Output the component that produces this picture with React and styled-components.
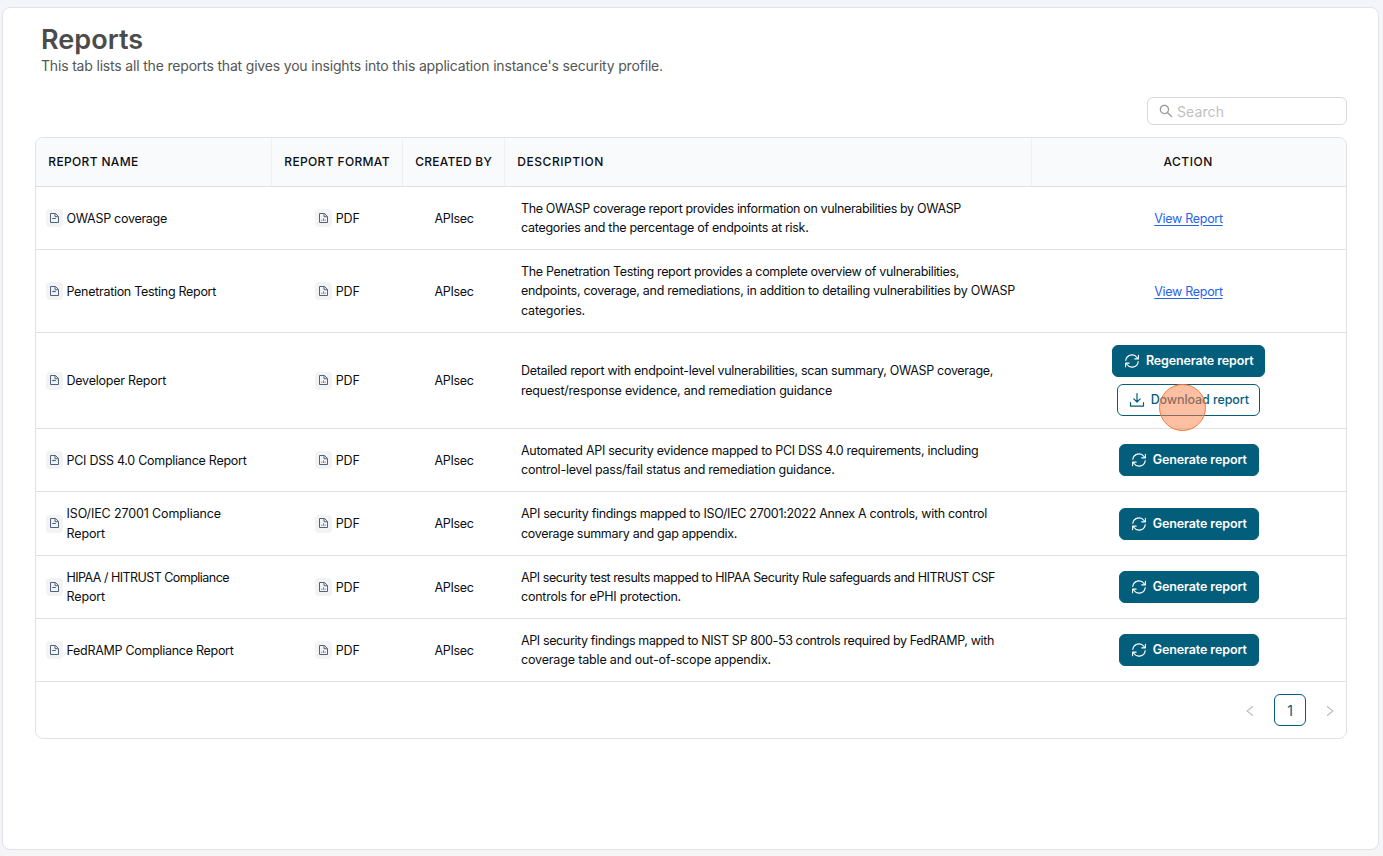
import styled, { createGlobalStyle, css } from "styled-components";
import { AiOutlineSearch, AiOutlineLeft, AiOutlineRight } from "react-icons/ai";

const GlobalStyle = createGlobalStyle`
  * {
    box-sizing: border-box;
  }

  body {
    margin: 0;
    background: #f4f5fb;
    color: #0b0d12;
    font-family: "Inter", "Liberation Sans", sans-serif;
    font-size: 12.5px;
  }
`;

const Page = styled.div`
  height: 856px;
  padding: 7px 4px 0 2px;
  overflow: hidden;
  background: linear-gradient(#f4f5fb 850px, #f5f5f5 850px);
`;

const Panel = styled.main`
  height: 843px;
  padding: 0 31px 0 32px;
  border: 1px solid #e2e3e7;
  border-radius: 8px;
  background: #fff;
`;

const PageHeader = styled.header`
  height: 89px;
  padding: 15px 0 0 6px;
`;

const Title = styled.h1`
  margin: 0;
  font-size: 27px;
  font-weight: 600;
  line-height: 33px;
  letter-spacing: 0.05px;
  color: #4b4b4b;
`;

const Subtitle = styled.p`
  margin: 0;
  font-size: 14px;
  line-height: 20px;
  letter-spacing: -0.179px;
  color: #555;
  white-space: nowrap;
`;

const Toolbar = styled.div`
  display: flex;
  justify-content: flex-end;
  height: 40px;
`;

const SearchBox = styled.label`
  display: flex;
  align-items: center;
  gap: 3px;
  width: 200px;
  height: 28px;
  padding: 0 10px;
  border: 1px solid #d9d9d9;
  border-radius: 6px;
  color: #999;

  & input {
    flex: 1;
    min-width: 0;
    padding: 0;
    border: none;
    outline: none;
    font-family: inherit;
    font-size: 14px;
    letter-spacing: 0.1px;
    background: none;
  }

  & input::placeholder {
    color: #bfbfbf;
  }
`;

const Table = styled.section`
  height: 602px;
  border: 1px solid #e0e2e5;
  border-radius: 8px;
  overflow: hidden;
`;

const columns = css`
  display: grid;
  grid-template-columns: 236px 131px 102px 527px 1fr;
`;

const HeadRow = styled.div`
  ${columns}
  height: 49px;
  background: #f9fafc;
  border-bottom: 1px solid #dedfe1;
`;

const HeadCell = styled.div`
  display: flex;
  align-items: center;
  justify-content: ${({ $center }) => ($center ? "center" : "flex-start")};
  padding: 0 12px 2px 12.3px;
  border-right: 1px solid #f0f0f0;
  font-size: 12px;
  font-weight: 500;
  letter-spacing: ${({ $track }) => $track}px;
  white-space: nowrap;

  &:last-child {
    padding-right: 14px;
    border-right: none;
  }
`;

const Row = styled.div`
  ${columns}
  height: ${({ $height }) => $height}px;
  border-bottom: 1px solid #dedfe1;
`;

const Cell = styled.div`
  display: flex;
  align-items: center;
  justify-content: ${({ $center }) => ($center ? "center" : "flex-start")};
  gap: 3.5px;
  padding: ${({ $pad }) => $pad || "0"};
`;

const ActionCell = styled(Cell)`
  flex-direction: column;
  gap: 7px;
`;

const IconTile = styled.span`
  display: grid;
  place-items: center;
  width: 17px;
  height: 18px;
  border-radius: 4px;
  background: #f3f3f4;
  color: #4f617f;
`;

const Lines = styled.div`
  display: flex;
  flex-direction: column;
  align-items: flex-start;
  white-space: nowrap;
`;

const Line = styled.span`
  line-height: 19.4px;
  letter-spacing: ${({ $track }) => $track || 0}px;

  &:only-child,
  ${() => IconTile} + & {
    margin-top: 0.8px;
  }
`;

const ReportLink = styled.a`
  color: #2563eb;
  letter-spacing: -0.295px;
  text-decoration: underline;
  text-underline-offset: 2px;
`;

const Button = styled.button`
  display: flex;
  align-items: center;
  justify-content: center;
  gap: 5.5px;
  width: ${({ $width }) => $width}px;
  height: 32px;
  padding: 0 0 1px 1px;
  border: 1px solid #035e7b;
  border-radius: 6px;
  background: ${({ $outline }) => ($outline ? "#fff" : "#035e7b")};
  color: ${({ $outline }) => ($outline ? "#035e7b" : "#fff")};
  font-family: inherit;
  font-size: 12.5px;
  font-weight: ${({ $outline }) => ($outline ? 500 : 600)};
  letter-spacing: -0.11px;
  white-space: nowrap;

  & svg {
    margin-top: 1px;
  }
`;

const PointerAnchor = styled.div`
  position: relative;
`;

const Pointer = styled.span`
  position: absolute;
  top: 0;
  left: 42px;
  width: 47px;
  height: 47px;
  border: 1px solid #f97a35;
  border-radius: 50%;
  background: rgba(255, 127, 72, 0.5);
  pointer-events: none;
`;

const Pagination = styled.nav`
  display: flex;
  align-items: center;
  justify-content: flex-end;
  height: 56px;
  gap: 17px;
  padding-right: 9px;
  color: #b8b8b8;

  & > svg {
    margin-top: 2px;
  }
`;

const PageNumber = styled.span`
  display: grid;
  place-items: center;
  width: 32px;
  height: 32px;
  border: 1px solid #035e7b;
  border-radius: 6px;
  color: #035e7b;
  font-size: 14px;
`;

function ReportIcon() {
  return (
    <svg width="9" height="11" viewBox="0 0 9 11" fill="none" stroke="currentColor">
      <path d="M.5 .5h5l3 3v6H.5z" />
      <path d="M5 .5v3.2h3.2" />
      <path d="M2.2 5.5h3.6" strokeWidth="1.2" />
    </svg>
  );
}

function PdfIcon() {
  return (
    <svg width="9" height="11" viewBox="0 0 9 11" fill="none" stroke="currentColor">
      <path d="M.5 .5h5l3 3v6H.5z" />
      <path d="M5 .5v3.2h3.2" />
      <path d="M2.8 8V6.6M4.5 8V5.2M6.1 8V6.4" strokeWidth=".7" />
    </svg>
  );
}

function RefreshIcon() {
  return (
    <svg
      width="16"
      height="16"
      viewBox="0 0 16 16"
      fill="none"
      stroke="currentColor"
      strokeWidth="1.1"
      strokeLinecap="round"
      strokeLinejoin="round"
    >
      <path d="M1.8 7.4A6.2 6.2 0 0 1 13 4.5L14.2 5.8M14.4 2.3v3.6h-3.6" />
      <path d="M14.2 8.6A6.2 6.2 0 0 1 3 11.5L1.8 10.2M1.6 13.7v-3.6h3.6" />
    </svg>
  );
}

function DownloadIcon() {
  return (
    <svg
      width="16"
      height="16"
      viewBox="0 0 16 16"
      fill="none"
      stroke="currentColor"
      strokeWidth="1.2"
      strokeLinecap="round"
      strokeLinejoin="round"
    >
      <path d="M8 1.5v8.3M4.8 6.8 8 10l3.2-3.2M1.5 10.5v3.6h13v-3.6" />
    </svg>
  );
}

// every line of text carries its own letter spacing
const REPORTS = [
  {
    name: [["OWASP coverage", -0.282]],
    description: [
      ["The OWASP coverage report provides information on vulnerabilities by OWASP", -0.351],
      ["categories and the percentage of endpoints at risk.", -0.284],
    ],
    action: "view",
    height: 63,
  },
  {
    name: [["Penetration Testing Report", -0.294]],
    description: [
      ["The Penetration Testing report provides a complete overview of vulnerabilities,", -0.34],
      ["endpoints, coverage, and remediations, in addition to detailing vulnerabilities by OWASP", -0.286],
      ["categories.", -0.192],
    ],
    action: "view",
    height: 83,
  },
  {
    name: [["Developer Report", -0.225]],
    description: [
      ["Detailed report with endpoint-level vulnerabilities, scan summary, OWASP coverage,", -0.314],
      ["request/response evidence, and remediation guidance", -0.215],
    ],
    action: "download",
    height: 96,
  },
  {
    name: [["PCI DSS 4.0 Compliance Report", -0.27]],
    description: [
      ["Automated API security evidence mapped to PCI DSS 4.0 requirements, including", -0.295],
      ["control-level pass/fail status and remediation guidance.", -0.249],
    ],
    action: "generate",
    height: 63,
  },
  {
    name: [
      ["ISO/IEC 27001 Compliance", -0.123],
      ["Report", -0.131],
    ],
    description: [
      ["API security findings mapped to ISO/IEC 27001:2022 Annex A controls, with control", -0.31],
      ["coverage summary and gap appendix.", -0.31],
    ],
    action: "generate",
    height: 64,
  },
  {
    name: [
      ["HIPAA / HITRUST Compliance", -0.537],
      ["Report", -0.131],
    ],
    description: [
      ["API security test results mapped to HIPAA Security Rule safeguards and HITRUST CSF", -0.436],
      ["controls for ePHI protection.", -0.217],
    ],
    action: "generate",
    height: 63,
  },
  {
    name: [["FedRAMP Compliance Report", -0.288]],
    description: [
      ["API security findings mapped to NIST SP 800-53 controls required by FedRAMP, with", -0.376],
      ["coverage table and out-of-scope appendix.", -0.163],
    ],
    action: "generate",
    height: 63,
  },
];

function TextLines({ lines }) {
  return (
    <Lines>
      {lines.map(([text, track]) => (
        <Line key={text} $track={track}>
          {text}
        </Line>
      ))}
    </Lines>
  );
}

function Action({ type }) {
  if (type === "view") return <ReportLink>View Report</ReportLink>;
  if (type === "generate")
    return (
      <Button $width={140}>
        <RefreshIcon />
        Generate report
      </Button>
    );

  return (
    <>
      <Button $width={153}>
        <RefreshIcon />
        Regenerate report
      </Button>
      <PointerAnchor>
        <Button $width={143} $outline>
          <DownloadIcon />
          Download report
        </Button>
        <Pointer />
      </PointerAnchor>
    </>
  );
}

function App() {
  return (
    <Page>
      <GlobalStyle />
      <Panel>
        <PageHeader>
          <Title>Reports</Title>
          <Subtitle>
            This tab lists all the reports that gives you insights into this
            application instance's security profile.
          </Subtitle>
        </PageHeader>
        <Toolbar>
          <SearchBox>
            <AiOutlineSearch size={16} />
            <input placeholder="Search" />
          </SearchBox>
        </Toolbar>
        <Table>
          <HeadRow>
            <HeadCell $track={0.34}>REPORT NAME</HeadCell>
            <HeadCell $track={0.35}>REPORT FORMAT</HeadCell>
            <HeadCell $track={0.23}>CREATED BY</HeadCell>
            <HeadCell $track={0.55}>DESCRIPTION</HeadCell>
            <HeadCell $track={0.542} $center>
              ACTION
            </HeadCell>
          </HeadRow>
          {REPORTS.map((report) => (
            <Row key={report.description[0][0]} $height={report.height}>
              <Cell $pad="0 0 0 10px">
                <IconTile>
                  <ReportIcon />
                </IconTile>
                <TextLines lines={report.name} />
              </Cell>
              <Cell $center>
                <IconTile>
                  <PdfIcon />
                </IconTile>
                <Line $track={-0.128}>PDF</Line>
              </Cell>
              <Cell $center>
                <Line $track={-0.332}>APIsec</Line>
              </Cell>
              <Cell $pad="0 0 0 16px">
                <TextLines lines={report.description} />
              </Cell>
              <ActionCell $center $pad="0 1px 0 0">
                <Action type={report.action} />
              </ActionCell>
            </Row>
          ))}
          <Pagination>
            <AiOutlineLeft size={14} />
            <PageNumber>1</PageNumber>
            <AiOutlineRight size={14} />
          </Pagination>
        </Table>
      </Panel>
    </Page>
  );
}

export default App;
